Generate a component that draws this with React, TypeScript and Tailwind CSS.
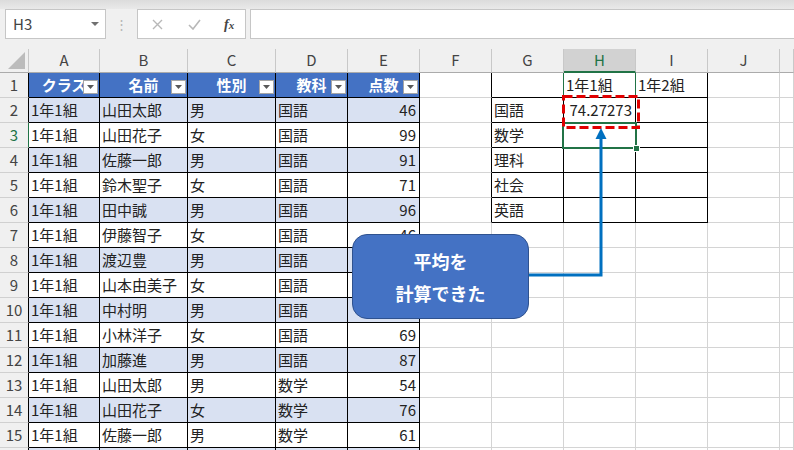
import React from 'react';

type Line = 'k' | 'g' | 'e';
type Bg = 'w' | 'h' | 'b';

const BR: Record<Line, string> = {
    k: 'border-r-black',
    g: 'border-r-[#d4d4d4]',
    e: 'border-r-[#217346]',
};
const BB: Record<Line, string> = {
    k: 'border-b-black',
    g: 'border-b-[#d4d4d4]',
    e: 'border-b-[#217346]',
};
const BG: Record<Bg, string> = {
    w: 'bg-white',
    h: 'bg-[#4472c4]',
    b: 'bg-[#d9e1f2]',
};

const cols = [
    { l: 'A', w: 'w-[71px]' },
    { l: 'B', w: 'w-[88px]' },
    { l: 'C', w: 'w-[88px]' },
    { l: 'D', w: 'w-[72px]' },
    { l: 'E', w: 'w-[72px]' },
    { l: 'F', w: 'w-[72px]' },
    { l: 'G', w: 'w-[72px]' },
    { l: 'H', w: 'w-[72px]' },
    { l: 'I', w: 'w-[72px]' },
    { l: 'J', w: 'w-[72px]' },
    { l: '', w: 'w-[14px]' },
];

const headers = ['クラス', '名前', '性別', '教科', '点数'];

const data: (string | number)[][] = [
    ['1年1組', '山田太郎', '男', '国語', 46],
    ['1年1組', '山田花子', '女', '国語', 99],
    ['1年1組', '佐藤一郎', '男', '国語', 91],
    ['1年1組', '鈴木聖子', '女', '国語', 71],
    ['1年1組', '田中誠', '男', '国語', 96],
    ['1年1組', '伊藤智子', '女', '国語', 46],
    ['1年1組', '渡辺豊', '男', '国語', 65],
    ['1年1組', '山本由美子', '女', '国語', 58],
    ['1年1組', '中村明', '男', '国語', 89],
    ['1年1組', '小林洋子', '女', '国語', 69],
    ['1年1組', '加藤進', '男', '国語', 87],
    ['1年1組', '山田太郎', '男', '数学', 54],
    ['1年1組', '山田花子', '女', '数学', 76],
    ['1年1組', '佐藤一郎', '男', '数学', 61],
];

const subjects = ['', '国語', '数学', '理科', '社会', '英語'];

interface CellDef {
    text: string;
    bg: Bg;
    br: Line;
    bb: Line;
    right?: boolean;
    header?: boolean;
}

const cellDef = (r: number, c: number): CellDef => {
    const d: CellDef = { text: '', bg: 'w', br: 'g', bb: 'g' };

    // main table A1:E
    if (c <= 4) {
        d.br = 'k';
        d.bb = 'k';
        if (r === 1) {
            d.bg = 'h';
            d.header = true;
            d.text = headers[c];
        } else {
            d.bg = r % 2 === 0 ? 'b' : 'w';
            // row 16 only peeks in at the bottom edge
            d.text = data[r - 2] ? String(data[r - 2][c]) : '';
            d.right = c === 4;
        }
        return d;
    }

    if (c === 5 && r <= 6) d.br = 'k';

    // summary table G1:I6
    if (c >= 6 && c <= 8 && r <= 6) {
        d.br = 'k';
        d.bb = 'k';
        if (c === 6) d.text = subjects[r - 1];
        if (c === 6 && r === 1) d.br = 'e';
        if (c === 7 && r === 1) {
            d.br = 'e';
            d.text = '1年1組';
        }
        if (c === 7 && r === 2) {
            d.text = '74.27273';
            d.right = true;
            d.bb = 'e';
        }
        if (c === 8 && r === 1) d.text = '1年2組';
    }
    return d;
};

const FilterButton = () => (
    <div className="absolute right-[1px] top-[7px] w-[15px] h-[14px] bg-white border border-[#a6a6a6] flex items-center justify-center">
        <svg width="7" height="4" viewBox="0 0 7 4">
            <polygon points="0,0 7,0 3.5,4" fill="#595959" />
        </svg>
    </div>
);

const TopBar = () => (
    <div className="h-[49px] bg-[#f0f0f0] flex flex-col">
        <div className="h-[9px] bg-gradient-to-b from-[#dcdcdc] to-[#e9e9e9]" />
        <div className="h-[30px] flex items-stretch">
            {/* Name box */}
            <div className="ml-[5px] w-[101px] bg-white border border-[#c6c6c6] flex items-center justify-between pl-[7px] pr-[6px]">
                <span className="text-[15px] text-[#444]">H3</span>
                <svg width="8" height="4" viewBox="0 0 8 4">
                    <polygon points="0,0 8,0 4,4" fill="#707070" />
                </svg>
            </div>
            <div className="w-[31px] flex items-center justify-center text-[#b5b5b5] text-[13px]">⋮</div>
            {/* cancel / enter / fx */}
            <div className="w-[109px] bg-white border border-[#c6c6c6] flex items-center">
                <svg className="ml-[14px]" width="11" height="11" viewBox="0 0 11 11">
                    <path d="M1 1 L10 10 M10 1 L1 10" stroke="#b8b8b8" strokeWidth="1.4" />
                </svg>
                <svg className="ml-[25px]" width="13" height="11" viewBox="0 0 13 11">
                    <path d="M1 6 L5 10 L12 1" stroke="#b8b8b8" strokeWidth="1.6" fill="none" />
                </svg>
                <span className="ml-[23px] text-[14px] italic font-['Liberation_Serif',serif] text-[#444] font-bold">
                    f<span className="text-[11px]">x</span>
                </span>
            </div>
            <div className="ml-[4px] flex-1 bg-white border-y border-l border-[#c6c6c6]" />
        </div>
    </div>
);

const ColumnHeader = () => (
    <div className="h-[24px] flex bg-[#f0f0f0]">
        <div className="w-[29px] shrink-0 relative border-r border-r-[#c8c8c8] border-b border-b-[#ababab]">
            <svg className="absolute left-0 top-0" width="29" height="24" viewBox="0 0 29 24">
                <polygon points="25,3 25,20 8,20" fill="#bcbcbc" />
            </svg>
        </div>
        {cols.map((col) => (
            <div
                key={col.l || 'k'}
                className={`${col.w} shrink-0 flex items-center justify-center text-[15px] border-r border-r-[#c8c8c8] ${
                    col.l === 'H'
                        ? 'bg-[#d2d2d2] text-[#217346] border-b-2 border-b-[#217346]'
                        : 'text-[#444] border-b border-b-[#ababab]'
                }`}
            >
                {col.l}
            </div>
        ))}
    </div>
);

const rows = Array.from({ length: 16 }, (_, i) => i + 1);

export default function App() {
    return (
        <div className="relative w-[794px] h-[450px] overflow-hidden bg-white font-['Noto_Sans_CJK_JP',sans-serif] text-[#222]">
            <TopBar />
            <ColumnHeader />

            {rows.map((r) => (
                <div key={r} className="h-[25px] flex">
                    <div
                        className={`w-[29px] shrink-0 flex items-center justify-center text-[15px] bg-[#f0f0f0] border-b border-b-[#d0d0d0] border-r ${
                            r === 3 ? 'border-r-[#217346] text-[#217346]' : 'border-r-black text-[#444]'
                        }`}
                    >
                        {r < 16 ? r : ''}
                    </div>
                    {cols.map((col, c) => {
                        const d = cellDef(r, c);
                        return (
                            <div
                                key={c}
                                className={`${col.w} shrink-0 relative overflow-hidden whitespace-nowrap flex items-center text-[15px] border-r border-b ${BR[d.br]} ${BB[d.bb]} ${BG[d.bg]} ${
                                    d.header
                                        ? 'justify-center font-bold text-white'
                                        : d.right
                                          ? 'justify-end pr-[3px]'
                                          : 'pl-[2px]'
                                }`}
                            >
                                {d.text}
                                {d.header && <FilterButton />}
                            </div>
                        );
                    })}
                </div>
            ))}

            {/* Active cell H3 */}
            <div className="absolute left-[562px] top-[122px] w-[75px] h-[27px] border-2 border-[#217346]" />
            <div className="absolute left-[633px] top-[145px] w-[7px] h-[7px] bg-[#217346] border border-white" />

            {/* Annotation drawing */}
            <svg className="absolute left-0 top-0 pointer-events-none" width="794" height="450" viewBox="0 0 794 450">
                <rect x="563.5" y="96.5" width="75" height="31" fill="none" stroke="#e00000" strokeWidth="3" strokeDasharray="9 4" />
                <path d="M520 275 H601 V137" fill="none" stroke="#0070c0" strokeWidth="3" />
                <polygon points="601,128 595.5,139 606.5,139" fill="#0070c0" />
            </svg>

            {/* Callout */}
            <div className="absolute left-[352px] top-[234px] w-[177px] h-[85px] rounded-[15px] bg-[#4472c4] border border-[#2f528f] flex flex-col items-center justify-center text-white font-bold text-[18px] leading-[32px]">
                <span>平均を</span>
                <span>計算できた</span>
            </div>
        </div>
    );
}
